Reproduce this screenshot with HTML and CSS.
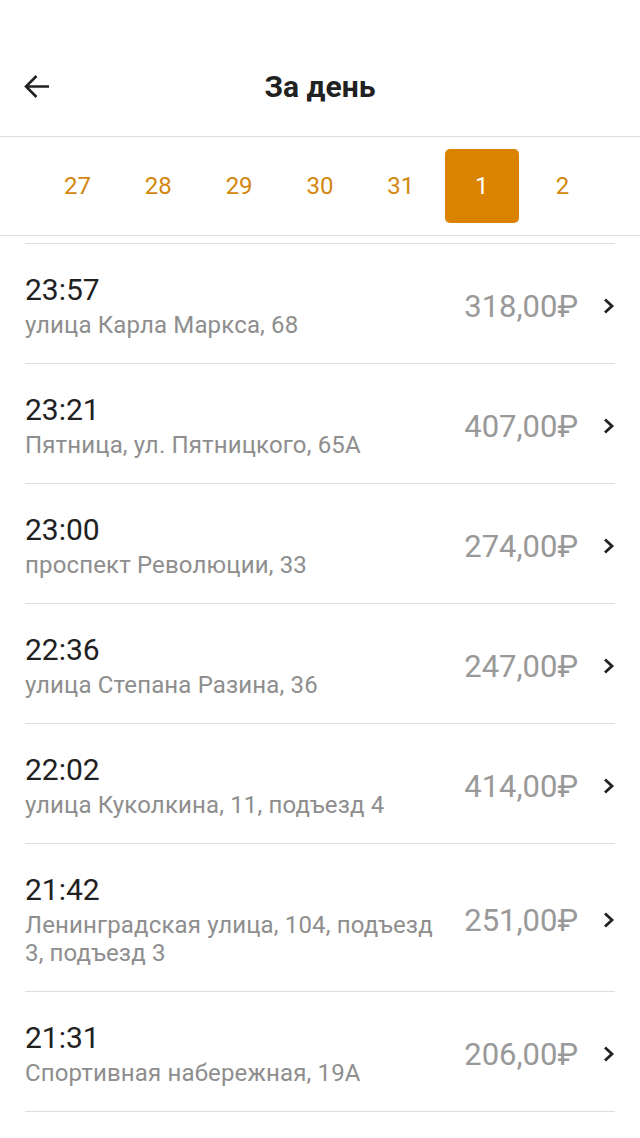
FILE: index.html
```html
<!DOCTYPE html>
<html lang="ru">
<head>
<meta charset="utf-8">
<title>За день</title>
<link rel="stylesheet" href="styles.css">
</head>
<body>
<header class="topbar">
  <button class="back" aria-label="Назад">
    <svg width="26" height="26" viewBox="0 0 26 26"><path d="M25 12.5H2.5M12.5 2L2 12.5L12.5 23" fill="none" stroke="#222" stroke-width="2.6" stroke-linecap="butt" stroke-linejoin="miter"/></svg>
  </button>
  <h1 class="title">За день</h1>
</header>
<nav class="days">
  <span class="day">27</span>
  <span class="day">28</span>
  <span class="day">29</span>
  <span class="day">30</span>
  <span class="day">31</span>
  <span class="day day-active">1</span>
  <span class="day">2</span>
</nav>
<ul class="list">
  <li class="row"><div class="info"><div class="time">23:57</div><div class="addr">улица Карла Маркса, 68</div></div><div class="price">318,00₽</div><svg class="chev" width="12" height="16" viewBox="0 0 12 16"><path d="M2 1.5L9 8L2 14.5" fill="none" stroke="#222" stroke-width="2.8"/></svg></li>
  <li class="row"><div class="info"><div class="time">23:21</div><div class="addr">Пятница, ул. Пятницкого, 65А</div></div><div class="price">407,00₽</div><svg class="chev" width="12" height="16" viewBox="0 0 12 16"><path d="M2 1.5L9 8L2 14.5" fill="none" stroke="#222" stroke-width="2.8"/></svg></li>
  <li class="row"><div class="info"><div class="time">23:00</div><div class="addr">проспект Революции, 33</div></div><div class="price">274,00₽</div><svg class="chev" width="12" height="16" viewBox="0 0 12 16"><path d="M2 1.5L9 8L2 14.5" fill="none" stroke="#222" stroke-width="2.8"/></svg></li>
  <li class="row"><div class="info"><div class="time">22:36</div><div class="addr">улица Степана Разина, 36</div></div><div class="price">247,00₽</div><svg class="chev" width="12" height="16" viewBox="0 0 12 16"><path d="M2 1.5L9 8L2 14.5" fill="none" stroke="#222" stroke-width="2.8"/></svg></li>
  <li class="row"><div class="info"><div class="time">22:02</div><div class="addr">улица Куколкина, 11, подъезд 4</div></div><div class="price">414,00₽</div><svg class="chev" width="12" height="16" viewBox="0 0 12 16"><path d="M2 1.5L9 8L2 14.5" fill="none" stroke="#222" stroke-width="2.8"/></svg></li>
  <li class="row"><div class="info"><div class="time">21:42</div><div class="addr">Ленинградская улица, 104, подъезд 3, подъезд 3</div></div><div class="price">251,00₽</div><svg class="chev" width="12" height="16" viewBox="0 0 12 16"><path d="M2 1.5L9 8L2 14.5" fill="none" stroke="#222" stroke-width="2.8"/></svg></li>
  <li class="row"><div class="info"><div class="time">21:31</div><div class="addr">Спортивная набережная, 19А</div></div><div class="price">206,00₽</div><svg class="chev" width="12" height="16" viewBox="0 0 12 16"><path d="M2 1.5L9 8L2 14.5" fill="none" stroke="#222" stroke-width="2.8"/></svg></li>
</ul>
</body>
</html>
```
FILE: styles.css
```css
* { box-sizing: border-box; }
html, body { margin: 0; padding: 0; background: #fff; }
body {
  font-family: Roboto, "Noto Sans", "Liberation Sans", sans-serif;
  color: #212121;
  width: 640px;
}
.topbar {
  height: 137px;
  padding-top: 38px;
  padding-bottom: 1px;
  border-bottom: 1px solid #dedede;
  display: grid;
  grid-template-columns: 1fr;
  align-items: center;
  position: relative;
}
.back {
  position: absolute;
  left: 24px;
  top: 74px;
  width: 26px;
  height: 26px;
  padding: 0;
  border: 0;
  background: none;
  display: flex;
}
.title {
  margin: 0;
  text-align: center;
  font-size: 30px;
  font-weight: 700;
  line-height: 98px;
  color: #212121;
}
.days {
  height: 99px;
  border-bottom: 1px solid #dedede;
  padding: 0 37px;
  display: grid;
  grid-template-columns: repeat(7, 1fr);
  align-items: center;
  justify-items: center;
}
.day {
  width: 74px;
  height: 74px;
  display: flex;
  align-items: center;
  justify-content: center;
  font-size: 24px;
  color: #d3870f;
  border-radius: 5px;
}
.day-active {
  background: #d98300;
  color: #fff;
}
.list {
  list-style: none;
  margin: 7px 25px 0;
  padding: 0;
  border-top: 1px solid #dedede;
}
.row {
  display: flex;
  align-items: center;
  padding: 29px 0 24px;
  border-bottom: 1px solid #dedede;
}
.info {
  flex: 1;
  min-width: 0;
}
.time {
  font-size: 30px;
  line-height: 34px;
  color: #212121;
}
.addr {
  margin-top: 4px;
  font-size: 24px;
  line-height: 28px;
  letter-spacing: 0.15px;
  color: #8e8e8e;
  max-width: 425px;
}
.price {
  font-size: 31px;
  color: #999;
  margin-left: 12px;
  white-space: nowrap;
}
.chev {
  margin-left: 25px;
  flex: none;
}
```
